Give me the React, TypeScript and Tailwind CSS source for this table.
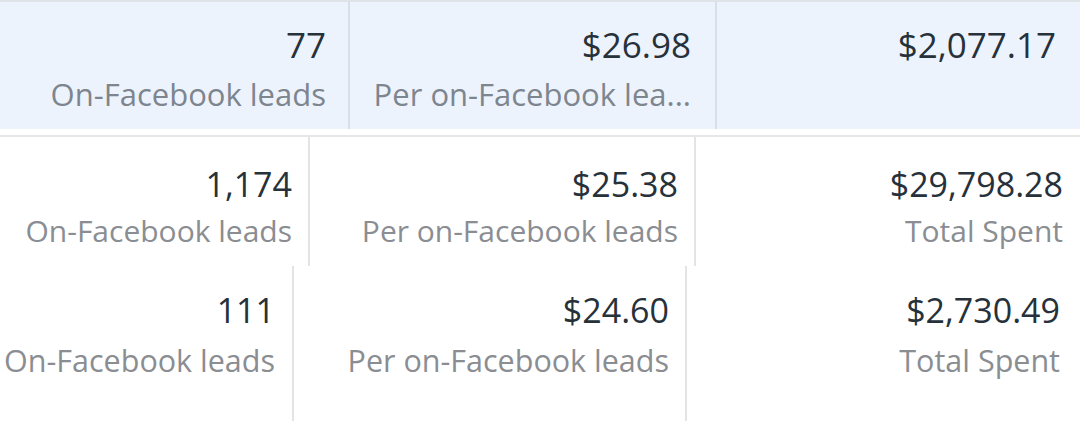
import React from "react";

type Cell = { w: string; value: string; label?: string; pr: string; divider?: boolean };

const font = { fontFamily: '"Open Sans", "Noto Sans", sans-serif' };

function Row({
  cells,
  rowClass,
  pt,
  gap,
  numClass,
  labelClass,
  dividerColor,
}: {
  cells: Cell[];
  rowClass: string;
  pt: string;
  gap: string;
  numClass: string;
  labelClass: string;
  dividerColor: string;
}) {
  return (
    <div className={`flex ${rowClass}`}>
      {cells.map((c, i) => (
        <div
          key={i}
          className={`${c.w} ${c.pr} ${pt} shrink-0 flex flex-col items-end text-right ${
            c.divider ? `border-r-2 ${dividerColor}` : ""
          }`}
        >
          <div className={`${numClass} text-[#27313a] whitespace-nowrap`}>{c.value}</div>
          {c.label && <div className={`${gap} ${labelClass} whitespace-nowrap`}>{c.label}</div>}
        </div>
      ))}
    </div>
  );
}

export default function App() {
  return (
    <div className="w-[1080px] h-[421px] bg-white overflow-hidden" style={font}>
      <div className="h-[2px] bg-[#dfe3e8]" />
      <Row
        rowClass="h-[127px] bg-[#edf3fd]"
        pt="pt-[25px]"
        gap="mt-[17px]"
        numClass="text-[35px] leading-[35px]"
        labelClass="text-[31px] leading-[31px] text-[#7d858e]"
        dividerColor="border-[#d9dfe8]"
        cells={[
          { w: "w-[350px]", value: "77", label: "On-Facebook leads", pr: "pr-[22px]", divider: true },
          { w: "w-[367px]", value: "$26.98", label: "Per on-Facebook lea...", pr: "pr-[24px]", divider: true },
          { w: "w-[363px]", value: "$2,077.17", pr: "pr-[24px]" },
        ]}
      />
      <div className="h-[6px] bg-white" />
      <div className="h-[2px] bg-[#e6e6e6]" />
      <Row
        rowClass="h-[129px] bg-white"
        pt="pt-[30px]"
        gap="mt-[15px]"
        numClass="text-[34px] leading-[34px]"
        labelClass="text-[30px] leading-[30px] text-[#8a8d91]"
        dividerColor="border-[#e4e4e4]"
        cells={[
          { w: "w-[310px]", value: "1,174", label: "On-Facebook leads", pr: "pr-[16px]", divider: true },
          { w: "w-[386px]", value: "$25.38", label: "Per on-Facebook leads", pr: "pr-[16px]", divider: true },
          { w: "w-[384px]", value: "$29,798.28", label: "Total Spent", pr: "pr-[17px]" },
        ]}
      />
      <Row
        rowClass="h-[155px] bg-white"
        pt="pt-[27px]"
        gap="mt-[18px]"
        numClass="text-[34px] leading-[34px]"
        labelClass="text-[30.5px] leading-[31px] text-[#8a8d91]"
        dividerColor="border-[#e4e4e4]"
        cells={[
          { w: "w-[294px]", value: "111", label: "On-Facebook leads", pr: "pr-[17px]", divider: true },
          { w: "w-[393px]", value: "$24.60", label: "Per on-Facebook leads", pr: "pr-[16px]", divider: true },
          { w: "w-[393px]", value: "$2,730.49", label: "Total Spent", pr: "pr-[20px]" },
        ]}
      />
    </div>
  );
}
